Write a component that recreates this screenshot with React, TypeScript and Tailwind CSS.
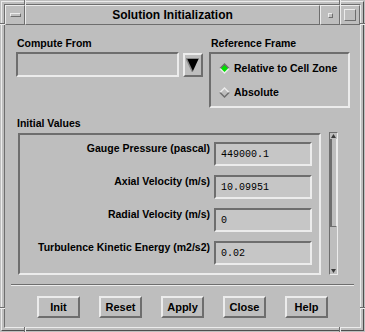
import React from "react";

// Motif-style bevels
const raised = "border border-t-[#ececec] border-l-[#ececec] border-r-[#6e6e6e] border-b-[#6e6e6e]";
const raised2 = "border-2 border-t-[#ececec] border-l-[#ececec] border-r-[#6e6e6e] border-b-[#6e6e6e]";
const sunken2 = "border-2 border-t-[#6e6e6e] border-l-[#6e6e6e] border-r-[#ececec] border-b-[#ececec]";

const rows: [string, string][] = [
  ["Gauge Pressure (pascal)", "449000.1"],
  ["Axial Velocity (m/s)", "10.09951"],
  ["Radial Velocity (m/s)", "0"],
  ["Turbulence Kinetic Energy (m2/s2)", "0.02"],
];

const Diamond = ({ on }: { on: boolean }) => (
  <svg width="11" height="11" viewBox="0 0 11 11">
    <polygon points="0,5.5 5.5,0 11,5.5" fill={on ? "#6e6e6e" : "#ececec"} />
    <polygon points="0,5.5 11,5.5 5.5,11" fill={on ? "#ececec" : "#6e6e6e"} />
    <polygon points="2,5.5 5.5,2 9,5.5 5.5,9" fill={on ? "#00e000" : "#bebebe"} />
  </svg>
);

export default function App() {
  return (
    <div className="relative w-[365px] h-[332px] bg-[#bebebe] p-[1px] font-['Liberation_Sans',sans-serif] text-black">
      <div className="h-full border border-t-[#ececec] border-l-[#ececec] border-r-[#4e4e4e] border-b-[#4e4e4e] p-[2px]">
        <div className="h-full flex flex-col border border-t-[#6e6e6e] border-l-[#6e6e6e] border-r-[#ececec] border-b-[#ececec]">
          {/* title bar */}
          <div className="flex h-[20px] shrink-0">
            <div className={`w-[20px] flex items-center justify-center ${raised}`}>
              <div className={`w-[11px] h-[4px] ${raised}`} />
            </div>
            <div className={`flex-1 flex items-center justify-center text-[12px] font-bold ${raised}`}>
              Solution Initialization
            </div>
            <div className={`w-[20px] flex items-center justify-center ${raised}`}>
              <div className={`w-[5px] h-[5px] ${raised}`} />
            </div>
            <div className={`w-[20px] flex items-center justify-center ${raised}`}>
              <div className={`w-[12px] h-[12px] ${raised}`} />
            </div>
          </div>

          {/* body */}
          <div className="flex-1 flex flex-col px-[6px] pt-[12px] text-[10.5px] font-bold leading-[13px]">
            <div className="flex gap-[6px] pl-[5px]">
              <div className="w-[187px]">
                <div className="pl-[1px]">Compute From</div>
                <div className="flex items-start gap-[4px] mt-[2px]">
                  <div className={`w-[164px] h-[25px] ${sunken2}`} />
                  <div className={`w-[20px] h-[24px] mt-[1px] flex items-start justify-start pl-[1px] pt-[3px] ${raised2}`}>
                    <svg width="13" height="14" viewBox="0 0 13 14">
                      <polygon points="0,0 13,0 6.5,14" fill="#000" />
                      <polyline points="0,0 6.5,14" stroke="#8a8a8a" strokeWidth="1.5" fill="none" />
                      <polyline points="0,0.5 13,0.5" stroke="#8a8a8a" strokeWidth="1" fill="none" />
                    </svg>
                  </div>
                </div>
              </div>
              <div className="w-[141px]">
                <div className="pl-[2px]">Reference Frame</div>
                <div className={`mt-[2px] h-[56px] pt-[2px] pl-[8px] ${sunken2}`}>
                  <div className="h-[24px] flex items-center gap-[4px]">
                    <Diamond on={true} />
                    <span>Relative to Cell Zone</span>
                  </div>
                  <div className="h-[24px] flex items-center gap-[4px]">
                    <Diamond on={false} />
                    <span>Absolute</span>
                  </div>
                </div>
              </div>
            </div>

            <div className="pl-[6px] mt-[9px]">Initial Values</div>
            <div className="flex items-start pl-[7px] mt-[3px]">
              <div className={`w-[303px] h-[142px] overflow-hidden flex flex-col gap-[9px] pt-[7px] pr-[7px] ${sunken2}`}>
                {rows.map(([label, value]) => (
                  <div key={label} className="flex justify-end items-start gap-[4px] shrink-0">
                    <div className="text-right">{label}</div>
                    <div className={`w-[98px] h-[24px] bg-[#c6c6c6] flex items-center pl-[5px] font-['Liberation_Mono',monospace] font-normal text-[10px] ${sunken2}`}>
                      {value}
                    </div>
                  </div>
                ))}
              </div>
              <div className="ml-[8px] -mt-[1px] w-[9px] h-[143px] flex flex-col border border-t-[#6e6e6e] border-l-[#6e6e6e] border-r-[#ececec] border-b-[#ececec]">
                <div className="h-[6px] flex items-center justify-center">
                  <svg width="5" height="4" viewBox="0 0 5 4">
                    <polygon points="2.5,0 5,4 0,4" fill="#3a3a3a" />
                  </svg>
                </div>
                <div className="h-[88px] border-l-2 border-l-[#6e6e6e] border-r border-r-[#ececec] border-b border-b-[#6e6e6e]" />
                <div className="flex-1" />
                <div className="h-[6px] flex items-center justify-center">
                  <svg width="5" height="4" viewBox="0 0 5 4">
                    <polygon points="0,0 5,0 2.5,4" fill="#3a3a3a" />
                  </svg>
                </div>
              </div>
            </div>

            <div className="mt-[9px] border-t border-t-[#6e6e6e] border-b border-b-[#ececec]" />

            <div className="flex justify-center gap-[19px] mt-[10px] text-[11px]">
              {["Init", "Reset", "Apply", "Close", "Help"].map((b) => (
                <div key={b} className={`w-[43px] h-[22px] flex items-center justify-center ${raised2}`}>
                  {b}
                </div>
              ))}
            </div>
          </div>
        </div>
      </div>

      {/* frame corner grooves */}
      <div className="absolute left-[24px] top-0 w-[2px] h-[5px] border-l border-l-[#6e6e6e] border-r border-r-[#ececec]" />
      <div className="absolute left-[339px] top-0 w-[2px] h-[5px] border-l border-l-[#6e6e6e] border-r border-r-[#ececec]" />
      <div className="absolute left-[24px] bottom-0 w-[2px] h-[5px] border-l border-l-[#6e6e6e] border-r border-r-[#ececec]" />
      <div className="absolute left-[339px] bottom-0 w-[2px] h-[5px] border-l border-l-[#6e6e6e] border-r border-r-[#ececec]" />
      <div className="absolute left-0 top-[23px] w-[5px] h-[2px] border-t border-t-[#6e6e6e] border-b border-b-[#ececec]" />
      <div className="absolute right-0 top-[23px] w-[5px] h-[2px] border-t border-t-[#6e6e6e] border-b border-b-[#ececec]" />
      <div className="absolute left-0 bottom-[23px] w-[5px] h-[2px] border-t border-t-[#6e6e6e] border-b border-b-[#ececec]" />
      <div className="absolute right-0 bottom-[23px] w-[5px] h-[2px] border-t border-t-[#6e6e6e] border-b border-b-[#ececec]" />
    </div>
  );
}
